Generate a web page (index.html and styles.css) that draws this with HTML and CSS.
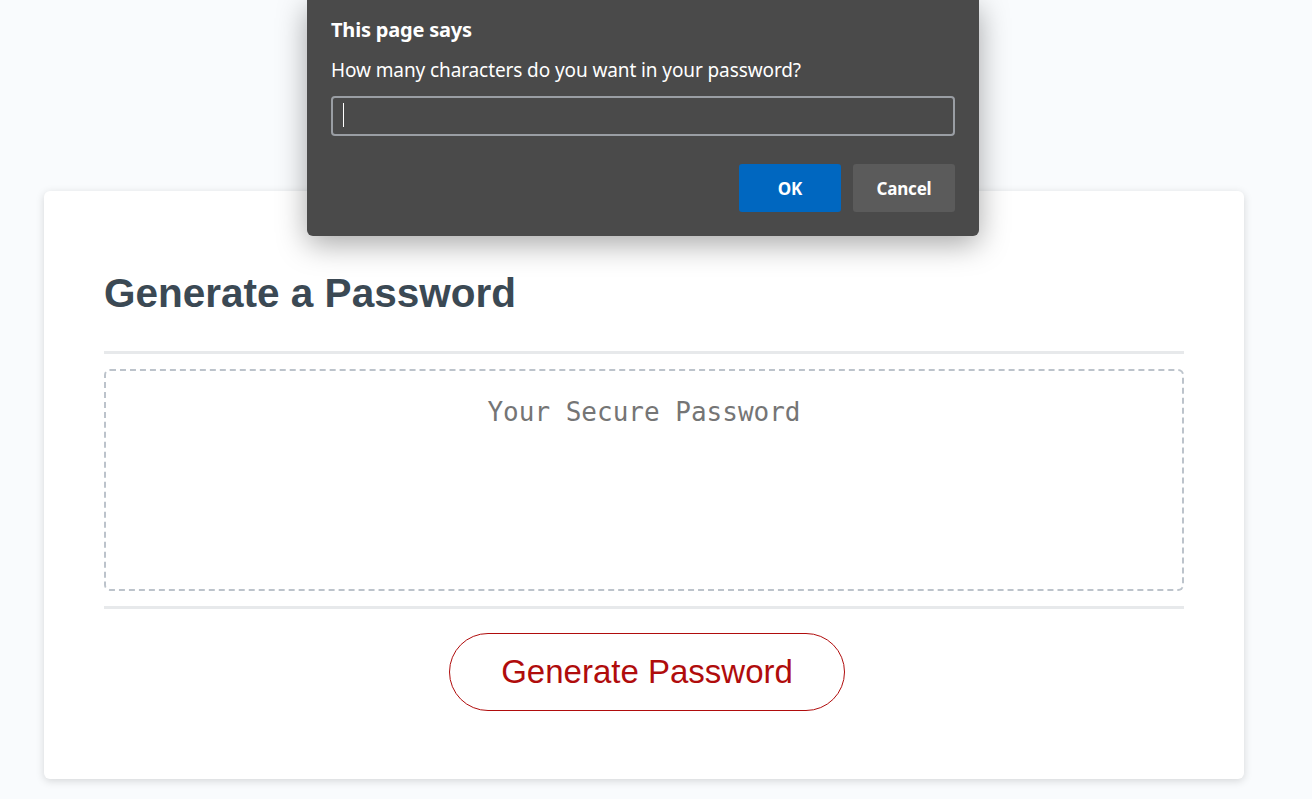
FILE: index.html
```html
<!DOCTYPE html>
<html lang="en">
<head>
    <meta charset="UTF-8">
    <meta name="viewport" content="width=device-width, initial-scale=1.0">
    <title>Password Generator</title>
    <link rel="stylesheet" href="styles.css">
</head>
<body>
    <div class="wrapper">
        <div class="card">
            <div class="card-header">
                <h2>Generate a Password</h2>
            </div>
            <div class="card-body">
                <textarea readonly id="password" placeholder="Your Secure Password" aria-label="Generated Password"></textarea>
            </div>
            <div class="card-footer">
                <button id="generate" class="btn">Generate Password</button>
            </div>
        </div>
    </div>

    <!-- the prompt box the browser shows after clicking generate -->
    <div class="dialog">
        <div class="dialog-title">This page says</div>
        <div class="dialog-msg">How many characters do you want in your password?</div>
        <div class="dialog-input"><span class="caret"></span></div>
        <div class="dialog-actions">
            <button class="dialog-btn ok">OK</button>
            <button class="dialog-btn cancel">Cancel</button>
        </div>
    </div>
</body>
</html>
```

FILE: styles.css
```css
* {
    box-sizing: border-box;
}

body {
    margin: 0;
    font-family: "Liberation Sans", Arial, sans-serif;
    background-color: #f9fbfd;
}

.wrapper {
    padding: 191px 44px 20px;
}

.card {
    width: 1200px;
    background-color: #ffffff;
    border-radius: 6px;
    box-shadow: rgba(0, 0, 0, 0.15) 0px 2px 8px 0px;
    color: hsl(206, 17%, 28%);
    padding: 79px 60px 52px;
}

.card-header h2 {
    margin: 0 0 35px;
    font-size: 40.5px;
    line-height: 46px;
    font-weight: bold;
}

.card-header::after,
.card-footer::before {
    content: " ";
    display: block;
    width: 100%;
    height: 3px;
    background: #e7e9eb;
}

.card-body {
    padding: 15px 0;
}

textarea {
    display: block;
    width: 100%;
    height: 222px;
    padding: 26px 20px 10px;
    border: 2px dashed #bcc3cb;
    border-radius: 6px;
    resize: none;
    overflow: hidden;
    font-family: "DejaVu Sans Mono", "Liberation Mono", monospace;
    font-size: 26px;
    text-align: center;
    color: #555;
    background: #fff;
    outline: none;
}

textarea::placeholder {
    color: #757575;
}

.card-footer {
    text-align: center;
}

.btn {
    display: inline-block;
    margin: 24px 16px 16px 22px;
    padding: 19px 51px;
    border: 1px solid #b00c0c;
    border-radius: 40px;
    background: #ffffff;
    color: #b00c0c;
    font-family: "Liberation Sans", Arial, sans-serif;
    font-size: 33px;
    line-height: 38px;
    cursor: pointer;
}

.dialog {
    position: absolute;
    top: 0;
    left: 307px;
    width: 672px;
    height: 236px;
    padding: 16px 24px 24px;
    background: #4a4a4a;
    border-radius: 0 0 6px 6px;
    box-shadow: 0 8px 30px rgba(0, 0, 0, 0.35);
    color: #ffffff;
    font-family: "Noto Sans", "Open Sans", sans-serif;
}

.dialog-title {
    font-size: 20px;
    font-weight: bold;
    line-height: 28px;
    letter-spacing: -0.2px;
}

.dialog-msg {
    margin-top: 14px;
    font-size: 19px;
    line-height: 24px;
    letter-spacing: -0.1px;
}

.dialog-input {
    margin-top: 14px;
    height: 40px;
    border: 2px solid #9a9ea4;
    border-radius: 4px;
    padding: 5px 10px;
}

.caret {
    display: block;
    width: 1px;
    height: 24px;
    background: #ffffff;
}

.dialog-actions {
    display: flex;
    justify-content: flex-end;
    gap: 12px;
    margin-top: 28px;
}

.dialog-btn {
    width: 102px;
    height: 48px;
    border: none;
    border-radius: 3px;
    color: #ffffff;
    font-family: "Noto Sans", "Open Sans", sans-serif;
    font-size: 17px;
    font-weight: bold;
    letter-spacing: -0.2px;
}

.dialog-btn.ok {
    background: #0067c0;
}

.dialog-btn.cancel {
    background: #5b5b5b;
}
```
